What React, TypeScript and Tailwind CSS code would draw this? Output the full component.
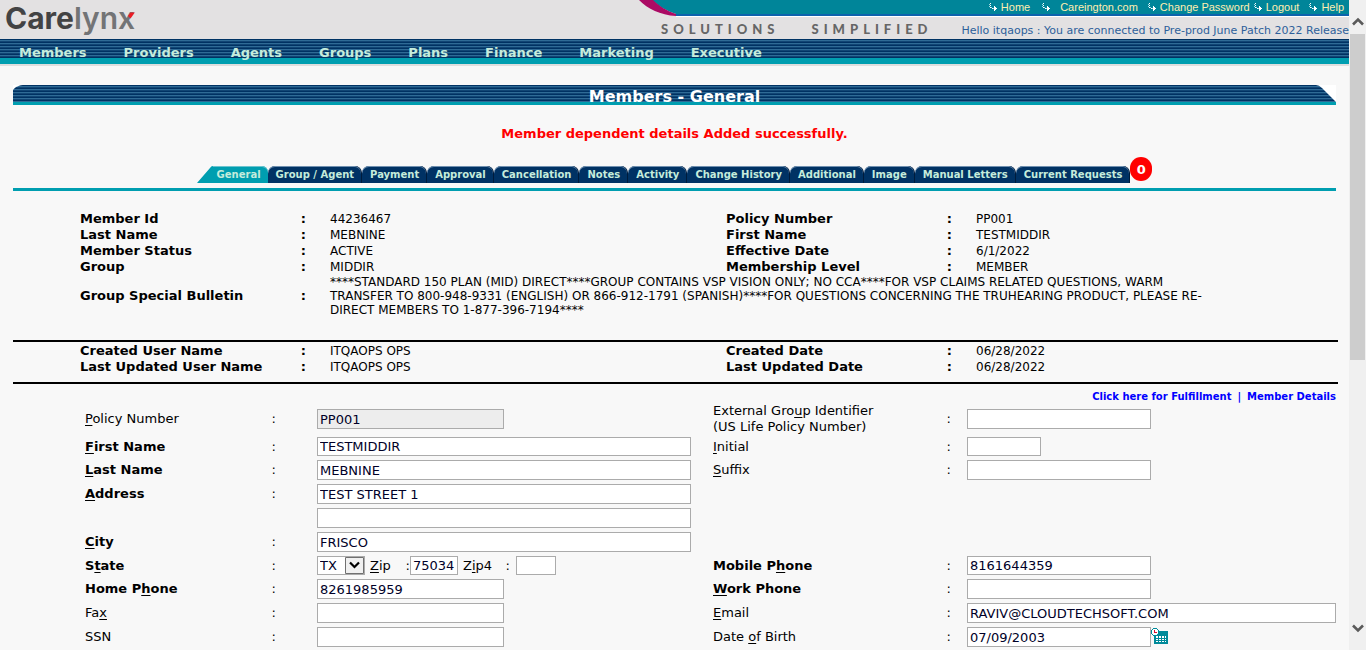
import React from "react";

const underline = (text: string) => {
  const [before, key, after] = text.split("_");
  return key === undefined ? <>{text}</> : <>{before}<u className="underline-offset-2">{key}</u>{after}</>;
};

const stripes = "bg-[repeating-linear-gradient(to_bottom,#003263_0px,#003263_1px,#2f6b96_1px,#2f6b96_2px,#114574_2px,#114574_3px)]";

const menu = ["Members", "Providers", "Agents", "Groups", "Plans", "Finance", "Marketing", "Executive"];
const tabs = ["Group / Agent", "Payment", "Approval", "Cancellation", "Notes", "Activity", "Change History", "Additional", "Image", "Manual Letters", "Current Requests"];

function TopLink({ children, className = "gap-[3px]" }: { children: string; className?: string }) {
  return (
    <a href="#" className={`flex items-center ${className}`}>
      <svg width="9" height="9" viewBox="0 0 9 9" shapeRendering="crispEdges" className="shrink-0" aria-hidden="true">
        <path d="M1 0h1v1h-1zM1 2h1v1h-1zM1 4h1v1h-1zM3 5h1v1h-1zM5 3h1v1h1v1h1v1h-1v1h-1v1h-1z" fill="#fff" />
        <path d="M0 1h1v1h-1zM0 3h1v1h-1zM2 4h1v1h-1zM4 5h1v1h-1z" fill="#a8dbe2" />
      </svg>
      <span>{children}</span>
    </a>
  );
}

function Header() {
  return (
    <header>
      <div className="flex h-[39px] justify-between bg-[#e3e1e2]">
        <a href="#" aria-label="Carelynx" className="relative pl-[5px] font-[Inter] text-[30px] leading-[36px] font-bold text-[#434344]">
          Care<span className="font-semibold text-[#737476]">lynx</span>
          <svg width="9" height="8" viewBox="0 0 9 8" className="absolute top-[12px] right-0" aria-hidden="true">
            <path d="M4.5 0.5H8.8L4.5 6.5L2 4Z" fill="#ec1c24" />
          </svg>
        </a>
        <div className="flex w-[711px] flex-col">
          <div className="flex h-[17px] shrink-0">
            <svg width="45" height="17" viewBox="0 0 45 17" className="shrink-0" aria-hidden="true">
              <path d="M14 0H45V14H38C29 11 20 6 14 0Z" fill="#008599" />
              <path d="M38 14H45V16H38Z" fill="#0d62ac" />
              <path d="M38 16H45V17H38Z" fill="#fff" />
              <path d="M1 0H15C21 6 29 11 38 14V16C22 15 10 9 1 0Z" fill="#ab0a64" />
            </svg>
            <nav aria-label="Site" className="flex flex-1 items-center justify-end border-b border-white bg-[#008599] pr-[5px] pb-[2px] font-['Liberation_Sans',sans-serif] text-[11px] leading-[14px] text-[#ffeeb0] shadow-[inset_0_-2px_#0d62ac]">
              <TopLink className="mr-[12px] gap-[3px]">Home</TopLink>
              <TopLink className="mr-[10px] gap-[9px]">Careington.com</TopLink>
              <TopLink className="mr-[4px] gap-[3px]">Change Password</TopLink>
              <TopLink className="mr-[10px] gap-[3px]">Logout</TopLink>
              <TopLink>Help</TopLink>
            </nav>
          </div>
          <div className="flex flex-1 items-center justify-between pl-[23px]">
            <div className="flex gap-[32px] pt-[3px] font-[Lato] text-[13px] font-black tracking-[5px] text-[#666]">
              <span>SOLUTIONS</span>
              <span>SIMPLIFIED</span>
            </div>
            <p className="pt-[5px] text-[11px] whitespace-nowrap text-[#2d5f9a]">Hello itqaops : You are connected to Pre-prod June Patch 2022 Release</p>
          </div>
        </div>
      </div>
      <div className="border-b-2 border-[#dedede]">
        <nav aria-label="Main" className={`flex h-[25px] border-b-6 border-[#009eb0] pl-[19px] text-[13px] leading-[27px] font-bold text-[#c5ecdc] ${stripes}`}>
          {menu.map((m) => (
            <a key={m} href="#" className="mr-[37px]">{m}</a>
          ))}
        </nav>
      </div>
    </header>
  );
}

function TitleBar() {
  return (
    <div className={`mt-[19px] flex h-[20px] justify-between border-b-3 border-[#009eb0] ${stripes}`}>
      <svg width="20" height="17" viewBox="0 0 20 17" aria-hidden="true">
        <path d="M0 0H12C6 0 2 2 0 5Z" fill="#fff" />
      </svg>
      <h1 className="text-[16px] leading-[23px] font-bold text-white">Members - General</h1>
      <svg width="20" height="17" viewBox="0 0 20 17" aria-hidden="true">
        <path d="M0 0H20V17L6 3Q3 0 0 0Z" fill="#fff" />
      </svg>
    </div>
  );
}

function Tabs() {
  return (
    <nav aria-label="Member sections" className="flex items-end justify-center border-b-3 border-[#009eb0] pb-[5px] text-[10px] leading-[17px] font-bold whitespace-nowrap text-[#c5ecdc]">
      <svg width="16" height="17" viewBox="0 0 16 17" aria-hidden="true">
        <path d="M0 17L13 2Q14 0 16 0V17Z" fill="#009eb0" />
      </svg>
      <a href="#" aria-current="page" className="rounded-tr-[6px] bg-[#009eb0] pr-[7px] pl-[4px] shadow-[inset_0_1px_#6cc4cf]">General</a>
      {tabs.map((t) => (
        <a key={t} href="#" className="rounded-t-[7px] border-r border-[#001c3c] bg-[#003264] pr-[7px] pl-[8px] shadow-[inset_0_1px_#7090b0]">{t}</a>
      ))}
      <span className="mb-[2px] flex h-[24px] w-[22px] items-center justify-center rounded-full bg-[#f00] text-[13px] text-white">0</span>
    </nav>
  );
}

function Pair({ label, value }: { label: string; value: string }) {
  return (
    <>
      <dt className="flex justify-between font-bold"><span>{label}</span><span>:</span></dt>
      <dd className="pl-[24px] text-[12px]">{value}</dd>
    </>
  );
}

const summaryGrid = "grid grid-cols-[226px_35fr_226px_32fr] pl-[67px] text-[13px] leading-[16px]";

function Summary() {
  return (
    <>
      <dl className={`${summaryGrid} pt-[20px] pb-[23px]`}>
        <Pair label="Member Id" value="44236467" />
        <Pair label="Policy Number" value="PP001" />
        <Pair label="Last Name" value="MEBNINE" />
        <Pair label="First Name" value="TESTMIDDIR" />
        <Pair label="Member Status" value="ACTIVE" />
        <Pair label="Effective Date" value="6/1/2022" />
        <Pair label="Group" value="MIDDIR" />
        <Pair label="Membership Level" value="MEMBER" />
        <dt className="flex items-center justify-between font-bold"><span>Group Special Bulletin</span><span>:</span></dt>
        <dd className="col-span-3 pr-[126px] pl-[24px] text-[12px] leading-[14px]">
          ****STANDARD 150 PLAN (MID) DIRECT****GROUP CONTAINS VSP VISION ONLY; NO CCA****FOR VSP CLAIMS RELATED QUESTIONS, WARM TRANSFER TO 800-948-9331 (ENGLISH) OR 866-912-1791 (SPANISH)****FOR QUESTIONS CONCERNING THE TRUHEARING PRODUCT, PLEASE RE-DIRECT MEMBERS TO 1-877-396-7194****
        </dd>
      </dl>
      <div className="-mr-[2px] border-y-2 border-black pr-[2px]">
        <dl className={`${summaryGrid} pt-[1px] pb-[7px]`}>
          <Pair label="Created User Name" value="ITQAOPS OPS" />
          <Pair label="Created Date" value="06/28/2022" />
          <Pair label="Last Updated User Name" value="ITQAOPS OPS" />
          <Pair label="Last Updated Date" value="06/28/2022" />
        </dl>
      </div>
    </>
  );
}

const box = "block border border-[#ababab] bg-white px-[2px] text-[13px] leading-[16px] text-[#000028] outline-none";

function Label({ id, text, bold }: { id: string; text: string; bold?: boolean }) {
  return (
    <label htmlFor={id} className={`flex items-center justify-between ${bold ? "font-bold" : ""}`}>
      <span>{text.split("|").map((line) => <span key={line} className="block">{underline(line)}</span>)}</span>
      <span className="pr-[1px] font-normal">:</span>
    </label>
  );
}

function Field({ id, value, size, right }: { id: string; value?: string; size: string; right?: boolean }) {
  return (
    <div className={`flex items-center py-[2px] ${right ? "pl-[15px]" : "pl-[40px]"}`}>
      <input id={id} defaultValue={value} className={`${box} ${size}`} />
    </div>
  );
}

const Blank = () => <div className="col-span-2" />;

function StateRow() {
  return (
    <div className="flex items-center py-[2px] pl-[40px]">
      <span className="relative block">
        <select id="state" className={`${box} h-[19px] w-[48px] appearance-none`} defaultValue="TX">
          <option>TX</option>
        </select>
        <svg width="19" height="17" viewBox="0 0 19 17" className="pointer-events-none absolute top-[1px] right-[1px]" aria-hidden="true">
          <path d="M0.5 0.5H18.5V16.5H0.5Z" fill="#f0f0f0" stroke="#707070" />
          <path d="M5 5.5L9.5 10L14 5.5" fill="none" stroke="#000" strokeWidth="2.2" />
        </svg>
      </span>
      <label htmlFor="zip" className="flex w-[45px] justify-between pl-[5px]"><span>{underline("_Z_ip")}</span><span>:</span></label>
      <input id="zip" defaultValue="75034" className={`${box} h-[19px] w-[48px]`} />
      <label htmlFor="zip4" className="flex w-[58px] justify-between pr-[6px] pl-[5px]"><span>{underline("Z_i_p4")}</span><span>:</span></label>
      <input id="zip4" className={`${box} h-[19px] w-[40px]`} />
    </div>
  );
}

function CalendarIcon() {
  return (
    <svg width="18" height="18" viewBox="0 0 18 18" shapeRendering="crispEdges" aria-hidden="true">
      <path d="M3 3H17V16H3Z" fill="#008a9a" />
      <path d="M5 8h2v2h-2zM8 8h2v2h-2zM11 8h2v2h-2zM14 8h1v2h-1zM5 11h2v1h-2zM8 11h2v1h-2zM11 11h2v1h-2zM14 11h1v1h-1zM5 13h2v1h-2zM8 13h2v1h-2zM11 13h2v1h-2zM14 13h1v1h-1z" fill="#fff" />
      <path d="M2 1h4v1h1v4h-1v1h-4v-1h-1v-4h1z" fill="#fff" />
      <path d="M2 0h4v1h-4zM6 1h1v1h-1zM7 2h1v4h-1zM6 6h1v1h-1zM2 7h4v1h-4zM1 6h1v1h-1zM0 2h1v4h-1zM1 1h1v1h-1z" fill="#008a9a" />
      <path d="M3 2h1v2h2v1h-3z" fill="#e01030" />
    </svg>
  );
}

function Form() {
  return (
    <form className="grid grid-cols-[192px_109fr_239px_96fr] pl-[72px] text-[13px] leading-[16px]">
      <Label id="policy" text="_P_olicy Number" />
      <div className="flex items-center pl-[40px]">
        <input id="policy" readOnly defaultValue="PP001" className="block h-[20px] w-[187px] border border-[#ababab] bg-[#ededed] px-[2px] text-[13px] leading-[16px] text-[#000028]" />
      </div>
      <Label id="external" text="External Gro_u_p Identifier|(US Life Policy Number)" />
      <Field id="external" size="h-[20px] w-[184px]" right />

      <Label id="first" text="_F_irst Name" bold />
      <Field id="first" value="TESTMIDDIR" size="h-[19px] w-[374px]" />
      <Label id="initial" text="_I_nitial" />
      <Field id="initial" size="h-[19px] w-[74px]" right />

      <Label id="last" text="_L_ast Name" bold />
      <Field id="last" value="MEBNINE" size="h-[20px] w-[374px]" />
      <Label id="suffix" text="_S_uffix" />
      <Field id="suffix" size="h-[20px] w-[184px]" right />

      <Label id="address" text="_A_ddress" bold />
      <Field id="address" value="TEST STREET 1" size="h-[20px] w-[374px]" />
      <Blank />

      <div className="col-start-2 flex py-[2px] pl-[40px]">
        <input aria-label="Address line 2" className={`${box} h-[20px] w-[374px]`} />
      </div>
      <Blank />

      <Label id="city" text="_C_ity" bold />
      <Field id="city" value="FRISCO" size="h-[20px] w-[374px]" />
      <Blank />

      <Label id="state" text="S_t_ate" bold />
      <StateRow />
      <Label id="mobile" text="Mobile P_h_one" bold />
      <Field id="mobile" value="8161644359" size="h-[19px] w-[184px]" right />

      <Label id="home" text="Home P_h_one" bold />
      <Field id="home" value="8261985959" size="h-[20px] w-[187px]" />
      <Label id="work" text="_W_ork Phone" bold />
      <Field id="work" size="h-[20px] w-[184px]" right />

      <Label id="fax" text="Fa_x_" />
      <Field id="fax" size="h-[20px] w-[187px]" />
      <Label id="email" text="_E_mail" />
      <Field id="email" value="RAVIV@CLOUDTECHSOFT.COM" size="h-[20px] w-full" right />

      <Label id="ssn" text="SSN" />
      <Field id="ssn" size="h-[20px] w-[187px]" />
      <Label id="birth" text="Date _o_f Birth" />
      <div className="flex items-center">
        <Field id="birth" value="07/09/2003" size="h-[20px] w-[184px]" right />
        <button type="button" aria-label="Pick a date"><CalendarIcon /></button>
      </div>

      <div className="col-start-2 py-[2px] pl-[40px]">
        <select aria-label="Gender" className="block h-[20px] w-[187px] border border-[#707070] bg-white" />
      </div>
      <div className="col-start-4 py-[2px] pl-[15px]">
        <select aria-label="Marital status" className="block h-[20px] w-[184px] border border-[#707070] bg-white" />
      </div>
    </form>
  );
}

function ScrollBar() {
  return (
    <aside aria-label="Scroll" className="flex w-[17px] shrink-0 flex-col bg-[#f0f0f0]">
      <button type="button" aria-label="Scroll up" className="flex h-[34px] items-end justify-center pb-[8px]">
        <svg width="12" height="9" viewBox="0 0 12 9" aria-hidden="true"><path d="M1 7.5L6 2.5L11 7.5" fill="none" stroke="#5a5a5a" strokeWidth="2.6" /></svg>
      </button>
      <div className="flex-1 px-px">
        <div className="h-[56%] bg-[#cdcdcd]" />
      </div>
      <button type="button" aria-label="Scroll down" className="flex h-[34px] items-start justify-center pt-[8px]">
        <svg width="12" height="9" viewBox="0 0 12 9" aria-hidden="true"><path d="M1 1.5L6 6.5L11 1.5" fill="none" stroke="#5a5a5a" strokeWidth="2.6" /></svg>
      </button>
    </aside>
  );
}

export default function App() {
  return (
    <div className="flex h-screen overflow-hidden bg-[#f8f8f8] font-['DejaVu_Sans',sans-serif] text-black">
      <div className="min-w-0 flex-1 overflow-hidden">
        <Header />
        <main className="px-[13px]">
          <TitleBar />
          <p className="mt-[21px] mb-[15px] text-center text-[13px] leading-[16px] font-bold text-[#f00]">Member dependent details Added successfully.</p>
          <Tabs />
          <Summary />
          <p className="flex justify-end gap-[6px] pt-[7px] text-[10px] leading-[12px] font-bold text-[#00f]">
            <a href="#">Click here for Fulfillment</a>
            <span>|</span>
            <a href="#">Member Details</a>
          </p>
          <Form />
        </main>
      </div>
      <ScrollBar />
    </div>
  );
}
